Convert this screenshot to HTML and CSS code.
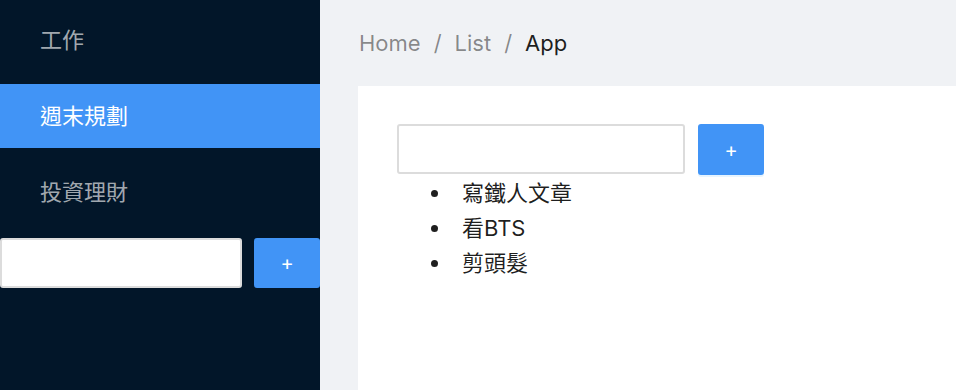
FILE: index.html
```html
<!doctype html>
<html lang="zh-Hant">
<head>
	<meta charset="utf-8">
	<title>App</title>
	<link rel="stylesheet" href="styles.css">
</head>
<body>
	<div class="layout">
		<!-- 側邊欄 -->
		<aside class="sider">
			<ul class="menu">
				<li class="menu_item">工作</li>
				<li class="menu_item menu_item_selected">週末規劃</li>
				<li class="menu_item">投資理財</li>
			</ul>
			<form class="add_form sider_form">
				<input type="text" class="add_input sider_input">
				<button type="button" class="add_button">+</button>
			</form>
		</aside>

		<!-- 主要內容 -->
		<main class="main">
			<nav class="breadcrumb">
				<span class="crumb">Home</span>
				<span class="crumb_sep">/</span>
				<span class="crumb">List</span>
				<span class="crumb_sep">/</span>
				<span class="crumb crumb_last">App</span>
			</nav>
			<div class="content">
				<form class="add_form">
					<input type="text" class="add_input main_input">
					<button type="button" class="add_button main_button">+</button>
				</form>
				<ul class="todo_list">
					<li>寫鐵人文章</li>
					<li>看BTS</li>
					<li>剪頭髮</li>
				</ul>
			</div>
		</main>
	</div>
</body>
</html>
```

FILE: styles.css
```css
html, body{
	margin: 0;
	height: 100%;
}
body{
	font-family: "Inter", "Noto Sans CJK TC", sans-serif;
	font-size: 22px;
	overflow: hidden;
}

.layout{
	display: flex;
	height: 100%;
}

.sider{
	width: 320px;
	flex: none;
	background-color: #021629;
}

.menu{
	list-style: none;
	margin: 0;
	padding: 8px 0 0 0;
}
.menu_item{
	height: 64px;
	line-height: 64px;
	padding-left: 40px;
	margin-bottom: 12px;
	color: rgba(255,255,255,0.65);
}
.menu_item_selected{
	background-color: #4194f6;
	color: #fff;
}

.add_form{
	display: flex;
	gap: 12px;
	margin: 0;
}
.sider_form{
	margin-top: 14px;
}

.add_input{
	box-sizing: border-box;
	height: 50px;
	border: 2px solid #dcdcdc;
	border-radius: 3px;
	background: #fff;
	padding: 0 10px;
	font: inherit;
}
.sider_input{
	width: 242px;
}
.main_input{
	width: 288px;
}

.add_button{
	width: 66px;
	height: 50px;
	border: none;
	border-radius: 3px;
	background-color: #4194f6;
	color: #fff;
	font-family: "Inter", sans-serif;
	font-size: 20px;
	padding: 0;
}
.main_button{
	height: 51px;
	margin-left: 1px;
	box-shadow: 0 2px 0 rgba(5,145,255,0.1);
}

.main{
	flex: 1;
	background-color: #f0f2f5;
	padding-left: 38px;
	display: flex;
	flex-direction: column;
}

.breadcrumb{
	height: 86px;
	display: flex;
	align-items: center;
	padding-left: 1px;
	color: rgba(0,0,0,0.45);
}
.crumb_sep{
	margin: 0 13px;
}
.crumb_last{
	color: rgba(0,0,0,0.88);
}

.content{
	flex: 1;
	background-color: #fff;
	padding: 38px 0 0 39px;
}

.todo_list{
	margin: 1px 0 0 0;
	padding-left: 55px;
	color: rgba(0,0,0,0.88);
	line-height: 35px;
}
.todo_list li{
	padding-left: 10px;
}
```
